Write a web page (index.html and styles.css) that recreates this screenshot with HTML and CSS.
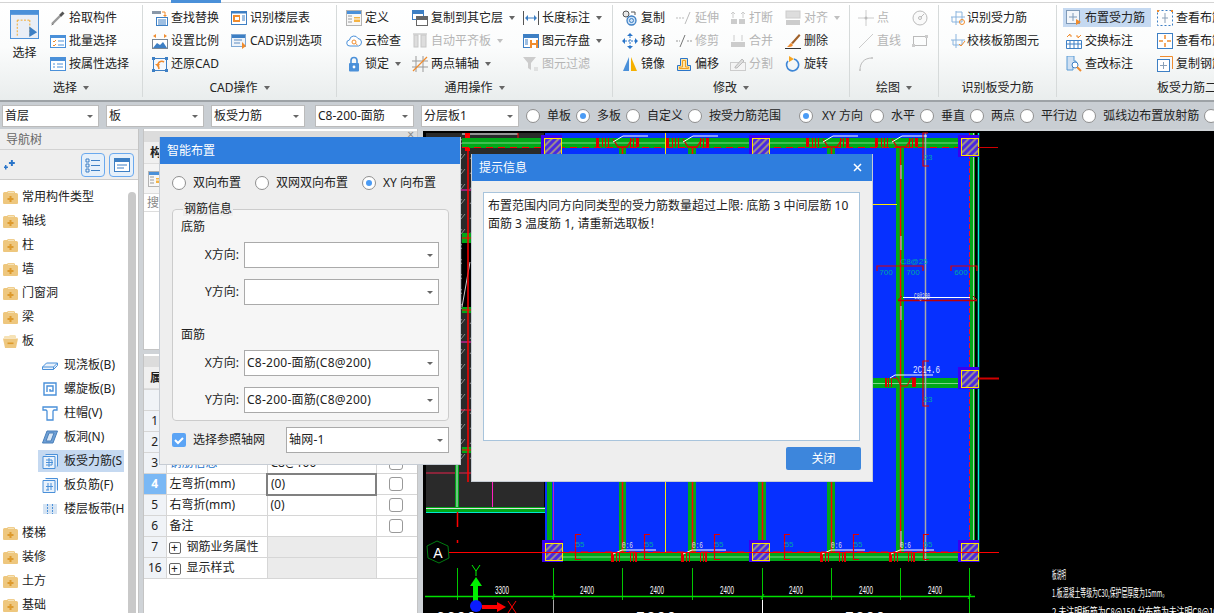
FILE: index.html
```html
<!DOCTYPE html>
<html lang="zh">
<head>
<meta charset="utf-8">
<title>智能布置</title>
<link rel="stylesheet" href="styles.css">
</head>
<body>
<svg class="sprite" xmlns="http://www.w3.org/2000/svg">
<symbol id="i-pick" viewBox="0 0 16 16"><path d="M2 14l8-8" stroke="#999" stroke-width="2.4" fill="none"/><path d="M1.5 15l2-1" stroke="#777"/><path d="M9 5l2 2 3.5-3.5-2-2z" fill="#555"/></symbol>
<symbol id="i-batch" viewBox="0 0 16 16"><rect x=".5" y="2.5" width="15" height="12" fill="#fff" stroke="#4a90d9"/><path d="M1 3h14v2H1z" fill="#4a90d9"/><path d="M3 8l1 1 2-2M3 12l1 1 2-2" stroke="#f08c2e" fill="none"/><path d="M8 8h6M8 12h6" stroke="#4a90d9"/></symbol>
<symbol id="i-attr" viewBox="0 0 16 16"><rect x=".5" y="1.5" width="15" height="13" fill="#fff" stroke="#4a90d9"/><path d="M1 2h14v3H1z" fill="#4a90d9"/><path d="M3 8h2M3 11h2M7 8h6M7 11h6" stroke="#4a90d9"/></symbol>
<symbol id="i-find" viewBox="0 0 16 16"><path d="M0 1h9v3H0z" fill="#8a98a8"/><path d="M10 2h3v3" stroke="#f08c2e" fill="none"/><path d="M13 7l-2-2h4z" fill="#f08c2e"/><rect x="4.500" y="7.500" width="11" height="8" fill="#fff" stroke="#3d7fc4"/><path d="M6 10h8M6 12h8M6 14h8" stroke="#3d7fc4"/></symbol>
<symbol id="i-scale" viewBox="0 0 16 16"><path d="M1 3l3-2v4zM15 3l-3-2v4z" fill="#f08c2e"/><rect x=".5" y="6.500" width="15" height="9" fill="#fff" stroke="#7b8794"/><path d="M1 15l4-5 3 2 3-3 4 6z" fill="#3d7fc4"/></symbol>
<symbol id="i-restore" viewBox="0 0 16 16"><rect x="1.500" y="2.500" width="13" height="12" fill="#f4f8fc" stroke="#3d7fc4"/><path d="M0 1h3v3H0zM13 1h3v3h-3zM0 13h3v3H0zM13 13h3v3h-3z" fill="#3d7fc4"/><path d="M12 6a4 4 0 0 0-6 2l1 5" stroke="#f08c2e" stroke-width="1.600" fill="none"/><path d="M3 8h5l-2 3z" fill="#f08c2e"/></symbol>
<symbol id="i-floor" viewBox="0 0 16 16"><rect x=".5" y="1.500" width="15" height="13" fill="#fff" stroke="#3d7fc4"/><path d="M1 2h14v1.500H1z" fill="#3d7fc4"/><path d="M2 5h7v7H2z" fill="#f08c2e"/><path d="M4 7h4v3H4z" fill="#fff"/><path d="M11 6h3M11 8h3M11 10h3" stroke="#3d7fc4"/></symbol>
<symbol id="i-cadopt" viewBox="0 0 16 16"><rect x=".5" y="1.500" width="14" height="12" fill="#eef3f9" stroke="#7fa8d4"/><path d="M1 2h13v3H1z" fill="#3d7fc4"/><path d="M3 7h8M3 10h6" stroke="#8fb0d3" stroke-width="1.500"/><path d="M11 9l4 4-4 3z" fill="#f08c2e"/></symbol>
<symbol id="i-define" viewBox="0 0 16 16"><rect x=".5" y=".5" width="15" height="15" fill="#f7f7f7" stroke="#b3b3b3"/><path d="M1 1h14v3H1z" fill="#4a90d9"/><path d="M2 6h4M2 9h4M2 12h4" stroke="#999"/><path d="M8 7h6v5H8z" fill="#f5b342"/><path d="M8 9h6" stroke="#fff"/></symbol>
<symbol id="i-cloud" viewBox="0 0 16 16"><path d="M4 13a3 3 0 0 1-.5-6A4.500 4.500 0 0 1 12 5.500 3.800 3.800 0 0 1 12.500 13z" fill="#fff" stroke="#4a90d9"/><circle cx="8" cy="9" r="2" fill="none" stroke="#f08c2e"/><path d="M9.500 10.500l2 1.500" stroke="#f08c2e"/></symbol>
<symbol id="i-lock" viewBox="0 0 16 16"><path d="M5 8V4.500a3 3 0 0 1 6 0V8" stroke="#4a90d9" stroke-width="1.600" fill="none"/><rect x="3" y="7" width="10" height="8.500" rx="1" fill="#4a90d9"/><circle cx="8" cy="11" r="1.400" fill="#fff"/></symbol>
<symbol id="i-copylayer" viewBox="0 0 16 16"><rect x=".5" y=".5" width="11" height="9" fill="#fff" stroke="#3d7fc4"/><path d="M1 1h10v3H1z" fill="#3d7fc4"/><rect x="4.500" y="6.500" width="11" height="9" fill="#fff" stroke="#666"/><path d="M5 7h10v3H5z" fill="#666"/></symbol>
<symbol id="i-autoalign" viewBox="0 0 16 16"><path d="M1 1h14" stroke="#bbb"/><rect x="2" y="2" width="4" height="12" fill="#ddd" stroke="#c6c6c6"/><rect x="9" y="2" width="5" height="12" fill="#ddd" stroke="#c6c6c6"/></symbol>
<symbol id="i-twopt" viewBox="0 0 16 16"><path d="M4 0v16M11 0v16M0 5h16M0 11h16" stroke="#999"/><path d="M1 15L15 1" stroke="#f08c2e" stroke-width="1.300"/></symbol>
<symbol id="i-len" viewBox="0 0 16 16"><path d="M.5 1v14M15.500 1v14" stroke="#555"/><path d="M3 8h10" stroke="#3d7fc4"/><path d="M2 8l3-3v6zM14 8l-3-3v6z" fill="#3d7fc4"/></symbol>
<symbol id="i-save" viewBox="0 0 16 16"><rect x=".5" y="1.500" width="15" height="13" fill="#fff" stroke="#3d7fc4"/><path d="M1 2h14v3H1z" fill="#3d7fc4"/><path d="M2 7h3M2 9h3M2 11h3" stroke="#3d7fc4"/><path d="M7 7h8v8H7z" fill="#f08c2e"/><path d="M9 7h4v3H9zM9 12h4v3H9z" fill="#fff"/></symbol>
<symbol id="i-filter" viewBox="0 0 16 16"><path d="M0 1h13L8 7v7l-3-2V7z" fill="#ccc"/><path d="M11 12h4M11 14h4" stroke="#ccc"/></symbol>
<symbol id="i-copy" viewBox="0 0 16 16"><circle cx="4" cy="4" r="3" fill="#e8e8e8" stroke="#555"/><path d="M9 2h4v3" stroke="#555" fill="none"/><circle cx="9.500" cy="10.500" r="4.500" fill="#cfe3f7" stroke="#3d7fc4" stroke-width="1.300"/><circle cx="9.500" cy="10.500" r="2" fill="none" stroke="#3d7fc4"/></symbol>
<symbol id="i-move" viewBox="0 0 16 16"><path d="M8 0l3 3H5zM8 16l-3-3h6zM0 8l3-3v6zM16 8l-3 3V5z" fill="#2a75c9"/><path d="M8 3v10M3 8h10" stroke="#2a75c9" stroke-dasharray="2 1"/></symbol>
<symbol id="i-mirror" viewBox="0 0 16 16"><path d="M7 1v14H1z" fill="#4a90d9"/><path d="M9 1v14h6z" fill="#f5b000"/></symbol>
<symbol id="i-extend" viewBox="0 0 16 16"><path d="M0 8h8" stroke="#bbb" stroke-dasharray="2 1"/><path d="M9 14l5-12" stroke="#bbb"/></symbol>
<symbol id="i-trim" viewBox="0 0 16 16"><path d="M0 8h4M11 8h5" stroke="#999" stroke-dasharray="2 1"/><path d="M4 14l5-12" stroke="#777"/></symbol>
<symbol id="i-offset" viewBox="0 0 16 16"><path d="M1.500 14.500V9.500h3v-7h7v7h3v5z" fill="#fbe5ad" stroke="#2a75c9"/><path d="M3.500 12.500V11h3V4.500h3V11h3v1.500z" fill="none" stroke="#f0a020"/></symbol>
<symbol id="i-break" viewBox="0 0 16 16"><path d="M1 9h6v5H1zM9 9h6v5H9z" fill="#ccc"/><path d="M3 2v6M13 2v6" stroke="#ccc"/><path d="M1 4l2-2 2 2M11 4l2-2 2 2" stroke="#ccc" fill="none"/></symbol>
<symbol id="i-merge" viewBox="0 0 16 16"><path d="M1 9h14v5H1z" fill="#ccc"/><path d="M4 2v6M12 2v6" stroke="#ccc"/></symbol>
<symbol id="i-split" viewBox="0 0 16 16"><rect x=".5" y="6.500" width="15" height="8" fill="#f4f4f4" stroke="#ccc"/><path d="M5 11l7-8 2 2-7 7H5z" fill="#ddd" stroke="#bbb"/></symbol>
<symbol id="i-align" viewBox="0 0 16 16"><rect x="1" y="1" width="14" height="7" fill="#ddd" stroke="#ccc"/><rect x="1" y="10" width="14" height="5" fill="#ccc"/></symbol>
<symbol id="i-del" viewBox="0 0 16 16"><path d="M6 10L14 1l1.500 1.500L8 11z" fill="#a0612a"/><path d="M6 10l2 2c-1 2-3 2-6 2 2-1 2-3 4-4z" fill="#f08c2e"/><path d="M0 15.500h16" stroke="#333"/></symbol>
<symbol id="i-rot" viewBox="0 0 16 16"><path d="M9 3a6 6 0 1 1-6 2" fill="none" stroke="#3d86d6" stroke-width="1.600"/><path d="M4 0l5 3-5 3z" fill="#f5a623"/></symbol>
<symbol id="i-point" viewBox="0 0 16 16"><path d="M8 0v16M0 8h16" stroke="#ccc"/><circle cx="8" cy="8" r="1.500" fill="#bbb"/></symbol>
<symbol id="i-circle" viewBox="0 0 16 16"><circle cx="8" cy="8" r="7" fill="#fafafa" stroke="#bbb"/><circle cx="8" cy="8" r="1.500" fill="none" stroke="#bbb"/><path d="M9 7l3-3" stroke="#bbb"/></symbol>
<symbol id="i-line" viewBox="0 0 16 16"><path d="M1 15L15 1" stroke="#ccc"/></symbol>
<symbol id="i-rect" viewBox="0 0 16 16"><rect x="1.500" y="3.500" width="13" height="9" fill="none" stroke="#bbb"/><path d="M13 2h3v3h-3zM0 11h3v3H0z" fill="#ccc"/></symbol>
<symbol id="i-arc" viewBox="0 0 16 16"><path d="M2 14C2 7 6 2 14 2" fill="none" stroke="#bbb"/><path d="M1 13h2v2H1zM13 1h2v2h-2z" fill="#ccc"/></symbol>
<symbol id="i-rec1" viewBox="0 0 16 16"><path d="M6 1v14M1 7h14" stroke="#8ab4de"/><path d="M6 2h6v10H2V7" fill="none" stroke="#8ab4de"/><circle cx="12" cy="12" r="2.500" fill="none" stroke="#f08c2e"/></symbol>
<symbol id="i-rec2" viewBox="0 0 16 16"><path d="M6 1v14M1 7h14" stroke="#8ab4de"/><path d="M3 7v5h9V7" fill="none" stroke="#8ab4de"/><path d="M9 11l2 2 4-5" fill="none" stroke="#f08c2e"/></symbol>
<symbol id="i-place" viewBox="0 0 16 16"><rect x=".5" y=".5" width="13" height="13" fill="#f3f6fa" stroke="#7f9ab8"/><path d="M7 3v8M3 7h8" stroke="#7f9ab8"/><path d="M10 9l5 3-5 3z" fill="#f08c2e"/></symbol>
<symbol id="i-swap" viewBox="0 0 16 16"><path d="M1 4l3-3v2h2M15 2l-3 3V3h-2" stroke="#f08c2e" fill="none"/><path d="M1 7h14v8H1z" fill="#fff"/><path d="M.5 7.500h15v8H.5zM.5 11h15M4 8v7M8 8v7M12 8v7" fill="none" stroke="#3d7fc4"/></symbol>
<symbol id="i-check" viewBox="0 0 16 16"><path d="M1 0h7v5h2v4H7v5H1z" fill="#cfe0f2" stroke="#5b9bd5"/><circle cx="9" cy="9" r="3" fill="#fff" stroke="#3d7fc4"/><path d="M11 11l4 4" stroke="#f08c2e" stroke-width="2"/></symbol>
<symbol id="i-view1" viewBox="0 0 16 16"><rect x=".5" y=".5" width="15" height="15" fill="none" stroke="#3d7fc4" stroke-dasharray="2 2"/><path d="M8 3v10M5 8h6" stroke="#8aa0b8"/><path d="M0 0h2v2H0zM14 0h2v2h-2z" fill="#f08c2e"/></symbol>
<symbol id="i-view2" viewBox="0 0 16 16"><rect x=".5" y=".5" width="15" height="15" fill="#fff" stroke="#3d7fc4"/><path d="M8 2v4M8 10v4M2 8h4M10 8h4" stroke="#f08c2e" stroke-width="1.500"/></symbol>
<symbol id="i-copyb" viewBox="0 0 16 16"><path d="M3 .5h12.500V13" fill="none" stroke="#f08c2e"/><rect x=".5" y="3.500" width="12" height="12" fill="#fff" stroke="#3d7fc4"/><path d="M6.500 6v7M3 9.500h7" stroke="#8aa0b8"/></symbol>
<symbol id="i-folder" viewBox="0 0 15 13"><path d="M0 2.500q0-1.500 1.500-1.500H4l1-1h6l1 1v1h1.500Q15 2 15 3.500V12q0 1-1 1H1q-1 0-1-1z" fill="#eec77e"/><path d="M5 0.700h6v1.300H5z" fill="#f6e2b5"/><path d="M6.500 5h2v2h2v2h-2v2h-2V9h-2V7h2z" fill="#dd9a2d"/></symbol>
<symbol id="i-folder-open" viewBox="0 0 15 13"><path d="M1 2q0-1 1-1h4l1-1h5l1 1v2H1z" fill="#f6e2b5"/><path d="M0 3.500h15L13 13H2z" fill="#eec77e"/><path d="M4.500 7.500h6v1.600h-6z" fill="#dd9a2d"/></symbol>
<symbol id="n-slab" viewBox="0 0 16 16"><path d="M.5 10l4-4h11v2.500l-4 4H.5zM.5 10h11v2.500M11.500 10l4-4" fill="#eaf2fb" stroke="#4a90d9"/></symbol>
<symbol id="n-spiral" viewBox="0 0 16 16"><path d="M2 2h12v12H2zM5 11V5h6v5H8V8" fill="none" stroke="#4a90d9" stroke-width="1.400"/></symbol>
<symbol id="n-cap" viewBox="0 0 16 16"><path d="M1 2h14v3h-3l-1 1v9H5V6L4 5H1z" fill="#fff" stroke="#4a90d9" stroke-width="1.300"/></symbol>
<symbol id="n-hole" viewBox="0 0 16 16"><path d="M.5 14L5 2h10.500L11 14z" fill="#6d9fd6" stroke="#4a7fb8"/><path d="M4 12l3-8h5l-3 8z" fill="#d8e6f5" stroke="#4a7fb8"/></symbol>
<symbol id="n-bar" viewBox="0 0 16 16"><path d="M3.500 1.500h12v12M1 3.500h12v12H1z" fill="#eaf2fb" stroke="#4a90d9"/><path d="M4 7h6v5H4M7 5v9M4 9.500h7" fill="none" stroke="#4a90d9"/></symbol>
<symbol id="n-neg" viewBox="0 0 16 16"><path d="M3.500 1.500h12v12M1 3.500h12v12H1z" fill="#eaf2fb" stroke="#4a90d9"/><path d="M6 6v7M9 6v7M4 9.500h7M4 13h3" fill="none" stroke="#4a90d9"/></symbol>
<symbol id="n-band" viewBox="0 0 16 16"><path d="M1 3h14v10H1z" fill="#d6e4f3"/><path d="M5.500 3v10M10.500 3v10" stroke="#4a90d9" stroke-dasharray="2 1"/></symbol>
</svg>

<div class="tabs-strip"><span class="tab-on"></span></div>

<header class="ribbon">
  <section class="group g1">
    <div class="group-body">
      <div class="big">
        <svg class="big-icon" viewBox="0 0 30 30"><rect x=".5" y=".5" width="29" height="29" fill="#e9eef6" stroke="#4a90d9"/><path d="M0 0h30v5H0z" fill="#4a90d9"/><path d="M7.500 10.500h13M20.500 10.500v16M7.500 10.500v16" stroke="#f5a623" stroke-dasharray="2 1.500" fill="none"/><path d="M20 17l8 6-8 5z" fill="#3d7fc4"/></svg>
        <span class="big-text">选择</span>
      </div>
      <div class="col">
        <div class="item"><svg class="ic"><use href="#i-pick"/></svg>拾取构件</div>
        <div class="item"><svg class="ic"><use href="#i-batch"/></svg>批量选择</div>
        <div class="item"><svg class="ic"><use href="#i-attr"/></svg>按属性选择</div>
      </div>
    </div>
    <div class="group-label">选择<i class="caret"></i></div>
  </section>

  <section class="group g2">
    <div class="group-body">
      <div class="col w79">
        <div class="item"><svg class="ic"><use href="#i-find"/></svg>查找替换</div>
        <div class="item"><svg class="ic"><use href="#i-scale"/></svg>设置比例</div>
        <div class="item"><svg class="ic"><use href="#i-restore"/></svg>还原CAD</div>
      </div>
      <div class="col">
        <div class="item"><svg class="ic"><use href="#i-floor"/></svg>识别楼层表</div>
        <div class="item"><svg class="ic"><use href="#i-cadopt"/></svg>CAD识别选项</div>
      </div>
    </div>
    <div class="group-label">CAD操作<i class="caret"></i></div>
  </section>

  <section class="group g3">
    <div class="group-body">
      <div class="col w66">
        <div class="item"><svg class="ic"><use href="#i-define"/></svg>定义</div>
        <div class="item"><svg class="ic"><use href="#i-cloud"/></svg>云检查</div>
        <div class="item"><svg class="ic"><use href="#i-lock"/></svg>锁定<i class="caret"></i></div>
      </div>
      <div class="col w111">
        <div class="item"><svg class="ic"><use href="#i-copylayer"/></svg>复制到其它层<i class="caret"></i></div>
        <div class="item off"><svg class="ic"><use href="#i-autoalign"/></svg>自动平齐板<i class="caret"></i></div>
        <div class="item"><svg class="ic"><use href="#i-twopt"/></svg>两点辅轴<i class="caret"></i></div>
      </div>
      <div class="col">
        <div class="item"><svg class="ic"><use href="#i-len"/></svg>长度标注<i class="caret"></i></div>
        <div class="item"><svg class="ic"><use href="#i-save"/></svg>图元存盘<i class="caret"></i></div>
        <div class="item off"><svg class="ic"><use href="#i-filter"/></svg>图元过滤</div>
      </div>
    </div>
    <div class="group-label">通用操作<i class="caret"></i></div>
  </section>

  <section class="group g4">
    <div class="group-body">
      <div class="col w54">
        <div class="item"><svg class="ic"><use href="#i-copy"/></svg>复制</div>
        <div class="item"><svg class="ic"><use href="#i-move"/></svg>移动</div>
        <div class="item"><svg class="ic"><use href="#i-mirror"/></svg>镜像</div>
      </div>
      <div class="col w54">
        <div class="item off"><svg class="ic"><use href="#i-extend"/></svg>延伸</div>
        <div class="item off"><svg class="ic"><use href="#i-trim"/></svg>修剪</div>
        <div class="item"><svg class="ic"><use href="#i-offset"/></svg>偏移</div>
      </div>
      <div class="col w55">
        <div class="item off"><svg class="ic"><use href="#i-break"/></svg>打断</div>
        <div class="item off"><svg class="ic"><use href="#i-merge"/></svg>合并</div>
        <div class="item off"><svg class="ic"><use href="#i-split"/></svg>分割</div>
      </div>
      <div class="col">
        <div class="item off"><svg class="ic"><use href="#i-align"/></svg>对齐<i class="caret"></i></div>
        <div class="item"><svg class="ic"><use href="#i-del"/></svg>删除</div>
        <div class="item"><svg class="ic"><use href="#i-rot"/></svg>旋转</div>
      </div>
    </div>
    <div class="group-label">修改<i class="caret"></i></div>
  </section>

  <section class="group g5">
    <div class="group-body">
      <div class="col w54">
        <div class="item off"><svg class="ic"><use href="#i-point"/></svg>点</div>
        <div class="item off"><svg class="ic"><use href="#i-line"/></svg>直线</div>
        <div class="item off"><svg class="ic"><use href="#i-arc"/></svg></div>
      </div>
      <div class="col">
        <div class="item off"><svg class="ic"><use href="#i-circle"/></svg></div>
        <div class="item off"><svg class="ic"><use href="#i-rect"/></svg></div>
      </div>
    </div>
    <div class="group-label">绘图<i class="caret"></i></div>
  </section>

  <section class="group g6">
    <div class="group-body">
      <div class="col">
        <div class="item"><svg class="ic"><use href="#i-rec1"/></svg>识别受力筋</div>
        <div class="item"><svg class="ic"><use href="#i-rec2"/></svg>校核板筋图元</div>
      </div>
    </div>
    <div class="group-label">识别板受力筋</div>
  </section>

  <section class="group g7">
    <div class="group-body">
      <div class="col w91">
        <div class="item selected"><svg class="ic"><use href="#i-place"/></svg>布置受力筋</div>
        <div class="item"><svg class="ic"><use href="#i-swap"/></svg>交换标注</div>
        <div class="item"><svg class="ic"><use href="#i-check"/></svg>查改标注</div>
      </div>
      <div class="col">
        <div class="item"><svg class="ic"><use href="#i-view1"/></svg>查看布筋范围</div>
        <div class="item"><svg class="ic"><use href="#i-view2"/></svg>查看布筋情况</div>
        <div class="item"><svg class="ic"><use href="#i-copyb"/></svg>复制钢筋</div>
      </div>
    </div>
    <div class="group-label">板受力筋二次编辑</div>
  </section>
</header>

<div class="toolbar">
  <div class="drop w97">首层</div>
  <div class="drop w98">板</div>
  <div class="drop w94">板受力筋</div>
  <div class="drop w99 gap-l">C8-200-面筋</div>
  <div class="drop w98">分层板1</div>
  <div class="radios">
    <label class="radio"><i class="dot"></i>单板</label>
    <label class="radio"><i class="dot on"></i>多板</label>
    <label class="radio"><i class="dot"></i>自定义</label>
    <label class="radio"><i class="dot"></i>按受力筋范围</label>
    <label class="radio second"><i class="dot on"></i><span class="xy">XY 方向</span></label>
    <label class="radio"><i class="dot"></i>水平</label>
    <label class="radio"><i class="dot"></i>垂直</label>
    <label class="radio"><i class="dot"></i>两点</label>
    <label class="radio"><i class="dot"></i>平行边</label>
    <label class="radio"><i class="dot"></i>弧线边布置放射筋</label>
    <label class="radio"><i class="dot"></i></label>
  </div>
</div>

<main class="main">
  <aside class="nav">
    <div class="nav-head">导航树</div>
    <div class="nav-tools">
      <svg class="stars" viewBox="0 0 12 10"><path d="M7 0h2v2h2v2H9v2H7V4H5V2h2zM1 5h1.500v1.500H4V8H2.500v1.500H1V8H-.5V6.500H1z" fill="#2a75c9"/></svg>
      <span class="nav-btn"><svg viewBox="0 0 16 16"><path d="M1 2h3v3H1zM1 7h3v3H1zM1 12h3v3H1z" fill="none" stroke="#3d7fc4"/><path d="M6 3.500h9M6 8.500h9M6 13.500h9" stroke="#3d7fc4"/></svg></span>
      <span class="nav-btn"><svg viewBox="0 0 16 16"><rect x=".5" y="1.500" width="15" height="13" fill="#fff" stroke="#3d7fc4"/><path d="M1 2h14v3H1z" fill="#3d7fc4"/><path d="M3 8h10M3 11h7" stroke="#3d7fc4"/></svg></span>
    </div>
    <div class="tree">
      <ul class="tree-list">
        <li class="node"><svg class="fold"><use href="#i-folder"/></svg>常用构件类型</li>
        <li class="node"><svg class="fold"><use href="#i-folder"/></svg>轴线</li>
        <li class="node"><svg class="fold"><use href="#i-folder"/></svg>柱</li>
        <li class="node"><svg class="fold"><use href="#i-folder"/></svg>墙</li>
        <li class="node"><svg class="fold"><use href="#i-folder"/></svg>门窗洞</li>
        <li class="node"><svg class="fold"><use href="#i-folder"/></svg>梁</li>
        <li class="node"><svg class="fold"><use href="#i-folder-open"/></svg>板</li>
        <li class="leaf"><svg class="nic"><use href="#n-slab"/></svg>现浇板(B)</li>
        <li class="leaf"><svg class="nic"><use href="#n-spiral"/></svg>螺旋板(B)</li>
        <li class="leaf"><svg class="nic"><use href="#n-cap"/></svg>柱帽(V)</li>
        <li class="leaf"><svg class="nic"><use href="#n-hole"/></svg>板洞(N)</li>
        <li class="leaf current"><svg class="nic"><use href="#n-bar"/></svg>板受力筋(S</li>
        <li class="leaf"><svg class="nic"><use href="#n-neg"/></svg>板负筋(F)</li>
        <li class="leaf"><svg class="nic"><use href="#n-band"/></svg>楼层板带(H</li>
        <li class="node"><svg class="fold"><use href="#i-folder"/></svg>楼梯</li>
        <li class="node"><svg class="fold"><use href="#i-folder"/></svg>装修</li>
        <li class="node"><svg class="fold"><use href="#i-folder"/></svg>土方</li>
        <li class="node"><svg class="fold"><use href="#i-folder"/></svg>基础</li>
      </ul>
      <div class="scrollbar"></div>
    </div>
  </aside>

  <div class="side">
    <div class="panel upper">
      <div class="panel-bar"><span class="panel-x">×</span></div>
      <div class="panel-tab">构</div>
      <div class="panel-tools"><svg class="ic"><use href="#i-define"/></svg></div>
      <div class="panel-search">搜</div>
    </div>
    <div class="panel lower">
      <div class="panel-bar"></div>
      <div class="panel-tab">属</div>
      <table class="props">
        <colgroup><col class="c-num"><col class="c-name"><col class="c-val"><col class="c-chk"></colgroup>
        <tr class="prop-head"><td class="num"></td><td></td><td></td><td></td></tr>
        <tr><td class="num">1</td><td></td><td></td><td></td></tr>
        <tr><td class="num">2</td><td></td><td></td><td><i class="box"></i></td></tr>
        <tr><td class="num">3</td><td class="link">钢筋信息</td><td>C8@100</td><td><i class="box"></i></td></tr>
        <tr><td class="num on">4</td><td>左弯折(mm)</td><td class="editing">(0)</td><td><i class="box"></i></td></tr>
        <tr><td class="num">5</td><td>右弯折(mm)</td><td>(0)</td><td><i class="box"></i></td></tr>
        <tr><td class="num">6</td><td>备注</td><td></td><td><i class="box"></i></td></tr>
        <tr><td class="num">7</td><td><i class="plus">+</i>钢筋业务属性</td><td class="shade"></td><td></td></tr>
        <tr><td class="num">16</td><td><i class="plus">+</i>显示样式</td><td class="shade"></td><td></td></tr>
      </table>
    </div>
  </div>

  <svg class="canvas" viewBox="423 131 791 482" xmlns="http://www.w3.org/2000/svg">
    <defs>
      <pattern id="hatch" width="12" height="15" patternUnits="userSpaceOnUse"><rect width="12" height="15" fill="#2a2a2a"/><path d="M2 9l4-5M5 9l4-5" stroke="#8a8a8a"/></pattern>
      <pattern id="colh" width="5" height="5" patternUnits="userSpaceOnUse" patternTransform="rotate(-45)"><rect width="5" height="5" fill="#4a2ae0"/><rect width="5" height="2" fill="#9a8a90"/></pattern>
      <g id="col"><rect x="-3" y="-3" width="21" height="22" fill="#3a00f0"/><rect x=".5" y=".5" width="17" height="17" fill="url(#colh)" stroke="#ffe800"/></g>
      <g id="motif-t"><path d="M-26 0v9h3v-9zM-20 0v9h1v-9zM-17 0v9h1v-9zM-14 0v9h1v-9zM8 0v9h1v-9zM11 0v9h1v-9zM14 0v9h3v-9z" fill="#e00000"/><path d="M-9 1l5 8H5l5-8" fill="none" stroke="#e00000" stroke-width="1.300"/><path d="M-9 4L1 -2H26" fill="none" stroke="#fff"/></g>
      <g id="motif-b"><path d="M-11 2v9h3v-9zM-6 2v9h1v-9zM-3 2v9h1v-9zM8 2v9h1v-9zM11 2v9h1v-9zM13 2v9h2v-9z" fill="#e00000"/><path d="M-9 3L0 -1H34" fill="none" stroke="#fff"/><text x="0" y="-3" class="cad-w" textLength="11" lengthAdjust="spacingAndGlyphs">0:6</text></g>
      <g id="brk"><path d="M6 .5H.5v25H6" fill="none" stroke="#e00000" stroke-width="1.200"/><text x="5" y="13" class="cad-t">55</text></g>
    </defs>
    <rect x="423" y="131" width="791" height="482" fill="#000"/>
    <rect x="426" y="133" width="118" height="374" fill="url(#hatch)"/>
    <rect x="426" y="465" width="118" height="42" fill="#2a2a2a"/>
    <rect x="462" y="243" width="82" height="64" fill="#000"/>
    <path d="M462 307l8-45" stroke="#ccc"/>
    <path d="M426 190h119M426 342h119" stroke="#ff20c0"/>
    <path d="M426 410h119M426 473h119" stroke="#e8204a"/>
    <path d="M492.500 465v46h7" fill="none" stroke="#ff20c0"/>
    <path d="M462 134H518" stroke="#fff"/>
    <path d="M518 133v14" stroke="#f00"/>
    <path d="M462 233h83v10h-83zM462 307h83v6h-83zM462 447h83v6h-83z" fill="#00a818"/>
    <path d="M462 238h83M462 310h83M462 450h83" stroke="#f00"/>
    <rect x="465" y="133" width="5" height="18" fill="#f00"/>
    <path d="M468 151v331" stroke="#f00" stroke-width="1.500"/>
    <path d="M457 465v42" stroke="#00a818" stroke-width="4"/>
    <path d="M457 465v42" stroke="#dde" stroke-width="1"/>
    <rect x="426" y="507" width="119" height="5" fill="#00a818"/>
    <path d="M426 508.500h119" stroke="#ddd"/><path d="M426 512.500h120" stroke="#00e8d0"/>
    <path d="M545.500 512v49" stroke="#00e8d0"/>
    <rect x="545" y="133" width="425" height="428" fill="#0630ff"/>
    <path d="M547 148v404h5v-404zM619 148v404h7v-404zM688 148v404h8v-404zM758 148v404h8v-404zM827 148v404h8v-404zM896 148v404h8v-404z" fill="#00a818"/>
    <path d="M970 133h5v428h-5z" fill="#00a818"/>
    <path d="M462 138h516v10H462zM545 378h433v10H545zM545 552h433v9H545z" fill="#00a818"/>
    <path d="M462 143h516M873 383.500h105M545 557h433" stroke="#7fd88a"/>
    <path d="M462 147.500h516M545 552h434" stroke="#f00" stroke-dasharray="7 5"/>
    <path d="M622.500 148v404M692.500 148v404M762.500 148v404M831.500 148v404M900.500 148v404" stroke="#f00" stroke-width="1.500"/>
    <path d="M553.500 148v404" stroke="#c020c0"/>
    <path d="M973.500 133v428" stroke="#b8c8b8"/><path d="M969.500 133v428" stroke="#e01030" stroke-dasharray="5 2"/>
    <path d="M978.500 133v429" stroke="#00f0e0" stroke-width="1.500"/>
    <path d="M925.500 133v428" stroke="#a8a8a8" stroke-width="1.500"/>
    <path d="M665.500 133v419" stroke="#ffe800"/>
    <path d="M873 204.500h24" stroke="#ffe800"/>
    <path d="M901 165v14M901 236v14M901 306v14M901 531v16" stroke="#b9d2ff"/>
    <use href="#motif-t" x="622" y="138"/><use href="#motif-t" x="692" y="138"/><use href="#motif-t" x="832" y="138"/><use href="#motif-t" x="901" y="138"/>
    <use href="#motif-b" x="622" y="551"/><use href="#motif-b" x="692" y="551"/><use href="#motif-b" x="831" y="551"/><use href="#motif-b" x="900" y="551"/>
    <path d="M890 378l5-3h38" fill="none" stroke="#fff"/>
    <path d="M893 378h4l4 8h6l4-8h5" fill="none" stroke="#e00000"/>
    <path d="M885 378h2v9h-2zM888 378h1v9h-1zM891 378h1v9h-1zM912 378h4v9h-4z" fill="#e00000"/>
    <text x="913" y="373" class="cad-big" textLength="27" lengthAdjust="spacingAndGlyphs">2C14.6</text>
    <use href="#col" x="544" y="138"/><use href="#col" x="752" y="138"/><use href="#col" x="961" y="138"/>
    <use href="#col" x="961" y="370"/>
    <use href="#col" x="545" y="543"/><use href="#col" x="752" y="543"/><use href="#col" x="961" y="543"/>
    <path d="M978 147.500h20" stroke="#d00000"/><path d="M978 378.500h21" stroke="#d00000" stroke-width="2"/>
    <path d="M449 552.500H999" stroke="#f00"/>
    <path d="M928 133H923V166H929M929 361H923V406H929" fill="none" stroke="#e00000" stroke-width="1.200"/>
    <text x="928" y="160" class="cad-t">23</text><text x="928" y="402" class="cad-t">23</text>
    <path d="M877 271v-5h46v5M951 271v-5h26v5" fill="none" stroke="#e00000" stroke-width="1.200"/>
    <text x="886" y="275" class="cad-t">700</text><text x="913" y="275" class="cad-t">700</text><text x="961" y="275" class="cad-t">600</text>
    <text x="914" y="264" class="cad-t">C8@25</text>
    <path d="M903 297.500h67" stroke="#fff"/><path d="M898 300.500h79" stroke="#c00000" stroke-width="1.500"/>
    <path d="M898 300l4-4M977 300l-4-4" stroke="#c00000"/>
    <text x="914" y="299" class="cad-w" textLength="16" lengthAdjust="spacingAndGlyphs">C8@200</text>
    <use href="#brk" x="575" y="534"/><use href="#brk" x="644" y="534"/><use href="#brk" x="714" y="534"/><use href="#brk" x="784" y="534"/><use href="#brk" x="853" y="534"/><use href="#brk" x="923" y="534"/>
    <path d="M457.500 512v15M457.500 540v3" stroke="#f00" stroke-width="1.500"/>
    <path d="M457.500 568v32M553.500 568v32M622.500 568v32M692.500 568v32M762.500 568v32M831.500 568v32M900.500 568v32M969.500 568v45" stroke="#00c800"/>
    <path d="M425 596.500h550" stroke="#00e000" stroke-width="1.500"/>
    <path d="M553.500 600v13" stroke="#aaa"/><path d="M762.500 600v13" stroke="#fff"/>
    <path d="M552 599l3-5M761 599l3-5M968 599l3-5" stroke="#00e000"/>
    <g class="cad-dim">
      <text x="495" y="594" textLength="14" lengthAdjust="spacingAndGlyphs">3300</text><text x="580" y="594" textLength="14" lengthAdjust="spacingAndGlyphs">2400</text><text x="650" y="594" textLength="14" lengthAdjust="spacingAndGlyphs">2400</text><text x="720" y="594" textLength="14" lengthAdjust="spacingAndGlyphs">2400</text><text x="789" y="594" textLength="14" lengthAdjust="spacingAndGlyphs">2400</text><text x="859" y="594" textLength="14" lengthAdjust="spacingAndGlyphs">2400</text><text x="928" y="594" textLength="14" lengthAdjust="spacingAndGlyphs">2400</text>
    </g>
    <polygon points="427,546 437,541 448,546 449,558 439,563 428,558" fill="none" stroke="#007a10"/>
    <text x="438" y="558" class="cad-a">A</text>
    <path d="M475.500 583v21" stroke="#00f000" stroke-width="5"/><path d="M476 577l-6 9h12z" fill="#00f000"/>
    <path d="M472 565l4 6 4-6M476 571v5" stroke="#00f000" fill="none"/>
    <path d="M482 607h18" stroke="#f00" stroke-width="4"/><path d="M506 607l-9-5v10z" fill="#f00"/>
    <path d="M508 601l8 12M516 601l-8 12" stroke="#f00"/>
    <circle cx="476" cy="606" r="6" fill="#0a1cff"/>
    <g class="cad-num"><text x="457" y="622">6600</text><text x="657" y="622">7200</text><text x="866" y="622">7200</text></g>
    <g class="cad-note">
      <text x="1052" y="579" textLength="14" lengthAdjust="spacingAndGlyphs">板说明</text>
      <text x="1052" y="597" textLength="116" lengthAdjust="spacingAndGlyphs">1.板混凝土等级为C30,保护层厚度为15mm。</text>
      <text x="1052" y="616" textLength="170" lengthAdjust="spacingAndGlyphs">2.未注明板筋为C8@150,分布筋为未注明C8@100</text>
    </g>
  </svg>
</main>

<div class="dialog smart">
  <div class="dlg-title">智能布置</div>
  <div class="dlg-body">
    <div class="mode-row">
      <label class="radio m1"><i class="dot"></i>双向布置</label>
      <label class="radio m2"><i class="dot"></i>双网双向布置</label>
      <label class="radio"><i class="dot on"></i>XY 向布置</label>
    </div>
    <fieldset class="info">
      <legend>钢筋信息</legend>
      <div class="sub-title">底筋</div>
      <div class="form-row"><span class="form-label">X方向:</span><div class="drop field"></div></div>
      <div class="form-row"><span class="form-label">Y方向:</span><div class="drop field"></div></div>
      <div class="sub-title second-title">面筋</div>
      <div class="form-row"><span class="form-label">X方向:</span><div class="drop field">C8-200-面筋(C8@200)</div></div>
      <div class="form-row"><span class="form-label">Y方向:</span><div class="drop field">C8-200-面筋(C8@200)</div></div>
    </fieldset>
    <div class="axis-row">
      <span class="tick"><svg viewBox="0 0 14 14"><path d="M3 7l3 3 5-5" fill="none" stroke="#fff" stroke-width="2"/></svg></span>
      <span class="axis-label">选择参照轴网</span>
      <div class="drop field axis">轴网-1</div>
    </div>
  </div>
</div>

<div class="dialog notice">
  <div class="dlg-title">提示信息<svg class="dlg-x" viewBox="0 0 9 9"><path d="M1 1l7 7M8 1l-7 7" stroke="#fff" stroke-width="1.500"/></svg></div>
  <div class="notice-body">
    <div class="message">布置范围内同方向同类型的受力筋数量超过上限: 底筋 3 中间层筋 10<br>面筋 3 温度筋 1, 请重新选取板！</div>
    <div class="actions"><button class="close-btn">关闭</button></div>
  </div>
</div>
</body>
</html>
```
FILE: styles.css
```css
* { box-sizing: border-box; }
html, body { margin: 0; padding: 0; }
body {
  position: relative;
  width: 1214px;
  height: 613px;
  overflow: hidden;
  background: #cfd3d7;
  font-family: "Noto Sans", "Noto Sans CJK SC", sans-serif;
  font-size: 12px;
  line-height: 16px;
  color: #222;
}
i { font-style: normal; }
.sprite { display: none; }

.tabs-strip { height: 3px; background: #fff; border-bottom: 1px solid #d4d4d4; position: relative; }
.tab-on { display: block; margin-left: 171px; width: 50px; height: 3px; background: #4a90d9; }

.ribbon {
  display: flex;
  width: 1214px;
  height: 97px;
  overflow: hidden;
  background: linear-gradient(#fff 0%, #fbfcfc 45%, #e9eded 100%);
}
.group { display: flex; flex-direction: column; flex: none; border-right: 1px solid #d6dada; margin: 2px 0 3px; }
.g1 { width: 143px; }
.g2 { width: 194px; }
.g3 { width: 276px; }
.g4 { width: 237px; }
.g5 { width: 89px; }
.g6 { width: 118px; }
.g7 { width: 296px; border-right: 0; }
.group-body { display: flex; height: 72px; padding-top: 1px; }
.g1 .group-body { padding-left: 10px; }
.g2 .group-body { padding-left: 9px; }
.g3 .group-body { padding-left: 9px; }
.g4 .group-body { padding-left: 9px; }
.g5 .group-body { padding-left: 8px; }
.g6 .group-body { padding-left: 11px; }
.g6 .ic { margin-right: 1px; }
.g7 .group-body { padding-left: 9px; }
.group-label { height: 20px; line-height: 22px; text-align: center; white-space: nowrap; }

.big { width: 40px; display: flex; flex-direction: column; }
.big-icon { display: block; width: 29px; height: 29px; margin-top: 4px; }
.big-text { display: block; width: 29px; text-align: center; margin-top: 6px; white-space: nowrap; }

.col { display: flex; flex-direction: column; flex: none; }
.w54 { width: 54px; }
.w55 { width: 55px; }
.w66 { width: 66px; }
.w79 { width: 79px; }
.w91 { width: 91px; }
.w111 { width: 111px; }
.item { display: flex; align-items: center; height: 23px; white-space: nowrap; }
.ic { width: 16px; height: 16px; margin-right: 3px; flex: none; }
.off { color: #b5b5b5; }
.selected { position: relative; background: #c5d9f1; height: 19px; margin: 2px 0; width: 88px; margin-left: -3px; padding-left: 3px; }
.caret {
  display: inline-block;
  width: 0;
  height: 0;
  margin-left: 6px;
  vertical-align: 2px;
  border-left: 3.5px solid transparent;
  border-right: 3.5px solid transparent;
  border-top: 4px solid #666;
}
.off .caret { border-top-color: #c0c0c0; }

.toolbar {
  display: flex;
  align-items: center;
  height: 29px;
  padding-left: 2px;
  gap: 7px;
  background: #c9ced3;
  border-top: 2px solid #9da2a6;
  white-space: nowrap;
}
.drop {
  position: relative;
  flex: none;
  height: 22px;
  line-height: 20px;
  padding-left: 2px;
  background: #fff;
  border: 1px solid #bbb;
}
.drop::after {
  content: "";
  position: absolute;
  right: 5px;
  top: 50%;
  margin-top: -1px;
  border-left: 3px solid transparent;
  border-right: 3px solid transparent;
  border-top: 3px solid #666;
}
.w97 { width: 97px; }
.w98 { width: 98px; }
.w94 { width: 94px; }
.w99 { width: 99px; }
.gap-l { margin-left: 3px; }
.radios { display: flex; align-items: center; }
.radio { display: flex; align-items: center; gap: 7px; margin-right: 5px; white-space: nowrap; }
.radio.second { margin-left: 13px; }
.xy { display: inline-block; width: 43px; margin-left: 2px; }
.dot {
  display: block;
  flex: none;
  position: relative;
  width: 14px;
  height: 14px;
  border-radius: 50%;
  background: #fff;
  border: 1px solid #8f8f8f;
}
.dot.on::after {
  content: "";
  position: absolute;
  left: 3px;
  top: 3px;
  width: 6px;
  height: 6px;
  border-radius: 50%;
  background: #4a9bf5;
}

.main { display: flex; height: 484px; }
.nav { width: 139px; flex: none; background: #eee; border-right: 1px solid #c4c4c4; }
.nav-head { height: 21px; line-height: 22px; padding-left: 6px; color: #666; background: #eee; border-bottom: 1px solid #d2d2d2; }
.nav-tools { display: flex; align-items: center; height: 30px; padding-left: 4px; background: #eee; border-bottom: 1px solid #ccc; }
.stars { width: 12px; height: 10px; margin-right: 65px; }
.nav-btn {
  display: flex;
  align-items: center;
  justify-content: center;
  width: 25px;
  height: 24px;
  margin-right: 4px;
  border: 1px solid #6aa9ee;
  border-radius: 4px;
  background: #e6f0fa;
}
.nav-btn svg { width: 16px; height: 16px; }
.tree { position: relative; height: 433px; background: #fff; overflow: hidden; }
.tree-list { list-style: none; margin: 0; padding: 5px 0 0; width: 124px; }
.node, .leaf { display: flex; align-items: center; height: 24px; white-space: nowrap; overflow: hidden; }
.node { padding-left: 3px; }
.leaf { padding-left: 4px; margin-left: 38px; width: 86px; }
.current { background: #c5d9f1; height: 22px; margin-top: 1px; margin-bottom: 1px; }
.fold { width: 15px; height: 13px; margin-right: 4px; flex: none; }
.nic { width: 16px; height: 16px; margin-right: 6px; flex: none; }
.scrollbar { position: absolute; right: 2px; top: 12px; width: 8px; height: 440px; border-radius: 4px; background: #c9c9c9; }

.side { width: 275px; flex: none; margin-left: 4px; display: flex; flex-direction: column; gap: 4px; }
.panel { background: #fff; border-right: 1px solid #c4c4c4; border-left: 1px solid #c4c4c4; }
.upper { height: 221px; border-bottom: 1px solid #c4c4c4; }
.lower { flex: 1; overflow: hidden; }
.panel-bar { position: relative; height: 11px; margin-top: 2px; background: #dcdcdc; }
.panel-x { position: absolute; right: 3px; top: -4px; color: #888; }
.panel-tab { height: 22px; line-height: 22px; padding-left: 6px; font-weight: 700; background: #f0f0f0; border-bottom: 1px solid #ddd; }
.panel-tools { height: 30px; padding: 7px 4px; background: #f4f4f4; border-bottom: 1px solid #ddd; }
.panel-search { height: 18px; line-height: 17px; padding-left: 3px; color: #888; border-bottom: 1px solid #ddd; }

.props { width: 273px; border-collapse: collapse; table-layout: fixed; background: #fff; }
.c-num { width: 22px; }
.c-name { width: 101px; }
.c-val { width: 109px; }
.c-chk { width: 41px; }
.props td { height: 21px; padding: 0 0 0 3px; border: 1px solid #d6d6d6; white-space: nowrap; overflow: hidden; line-height: 18px; }
.props .num { padding: 0; text-align: center; background: #f0f3f7; }
.props .num.on { background: #7ab8f5; color: #fff; font-weight: 700; }
.props td:first-child { border-left: 0; }
.prop-head td { background: #f0f3f7; }
.props .link { color: #2a75c9; }
.props .editing { border: 2px solid #808080; }
.props .shade { background: #ebebeb; }
.box { display: block; width: 14px; height: 14px; margin-left: 9px; border: 1px solid #999; border-radius: 3px; background: #fff; }
.plus {
  display: inline-block;
  width: 12px;
  height: 12px;
  margin: 0 6px 0 -1px;
  line-height: 10px;
  text-align: center;
  vertical-align: -1px;
  border: 1px solid #666;
  border-radius: 2px;
}

.canvas { display: block; flex: none; width: 791px; height: 482px; margin: 2px 0 0 5px; }
.cad-t { font: 8px "Liberation Sans", sans-serif; fill: #00a8a0; text-anchor: middle; }
.cad-w { font: 9px "Liberation Mono", monospace; fill: #ddd; text-anchor: start; }
.cad-big { font: 10px "Liberation Mono", monospace; fill: #e8e8ff; text-anchor: start; }
.cad-a { font: 14px "Liberation Sans", sans-serif; fill: #fff; text-anchor: middle; }
.cad-dim text { font: 11px "Liberation Sans", sans-serif; fill: #fff; }
.cad-num text { font: 15px "Liberation Sans", sans-serif; fill: #fff; text-anchor: middle; letter-spacing: 2px; }
.cad-note text { font: 11px "Noto Sans CJK SC", sans-serif; fill: #fff; }

.dialog { position: absolute; background: #eee; border: 1px solid #c6ccd4; border-top: 0; }
.smart { left: 159px; top: 137px; width: 302px; height: 328px; }
.notice { left: 471px; top: 154px; width: 402px; height: 328px; }
.dlg-title { position: relative; height: 27px; line-height: 27px; padding-left: 7px; color: #fff; background: #2f7ede; }
.dlg-x { position: absolute; right: 10px; top: 9px; width: 9px; height: 9px; }

.dlg-body { padding: 12px 12px 0; }
.mode-row { display: flex; height: 14px; align-items: center; padding-left: 0; }
.radio.m1 { margin-right: 14px; }
.radio.m2 { margin-right: 14px; }
.info { position: relative; margin: 12px 0 0; padding: 0 9px 0 8px; width: 277px; height: 219px; background: #f6f6f6; border: 1px solid #ccc; border-radius: 4px; }
.info legend { margin-left: 2px; padding: 0 1px; line-height: 14px; background: #eee; }
.sub-title { height: 16px; line-height: 16px; margin-top: 3px; }
.second-title { margin-top: 22px; }
.form-row { display: flex; align-items: center; margin-top: 11px; }
.sub-title + .form-row { margin-top: 7px; }
.form-label { width: 58px; text-align: right; margin-left: 0; margin-right: 5px; flex: none; }
.field { width: 195px; height: 26px; line-height: 24px; border-color: #aaa; letter-spacing: .25px; }
.axis-row { display: flex; align-items: center; margin-top: 6px; }
.tick { display: block; flex: none; width: 14px; height: 14px; border-radius: 2px; background: #5ba4f5; }
.tick svg { display: block; width: 14px; height: 14px; }
.axis-label { margin-left: 7px; width: 93px; flex: none; }
.axis { width: 163px; }

.notice-body { padding: 11px 12px 0 11px; }
.message { height: 249px; padding: 4px; line-height: 18px; background: #fff; border: 1px solid #a8c4dc; white-space: nowrap; }
.actions { display: flex; justify-content: flex-end; margin: 6px -1px 0 0; }
.close-btn { width: 75px; height: 23px; padding: 0; font: inherit; line-height: 20px; color: #fff; background: #3d86dc; border: 0; border-radius: 2px; }
```
